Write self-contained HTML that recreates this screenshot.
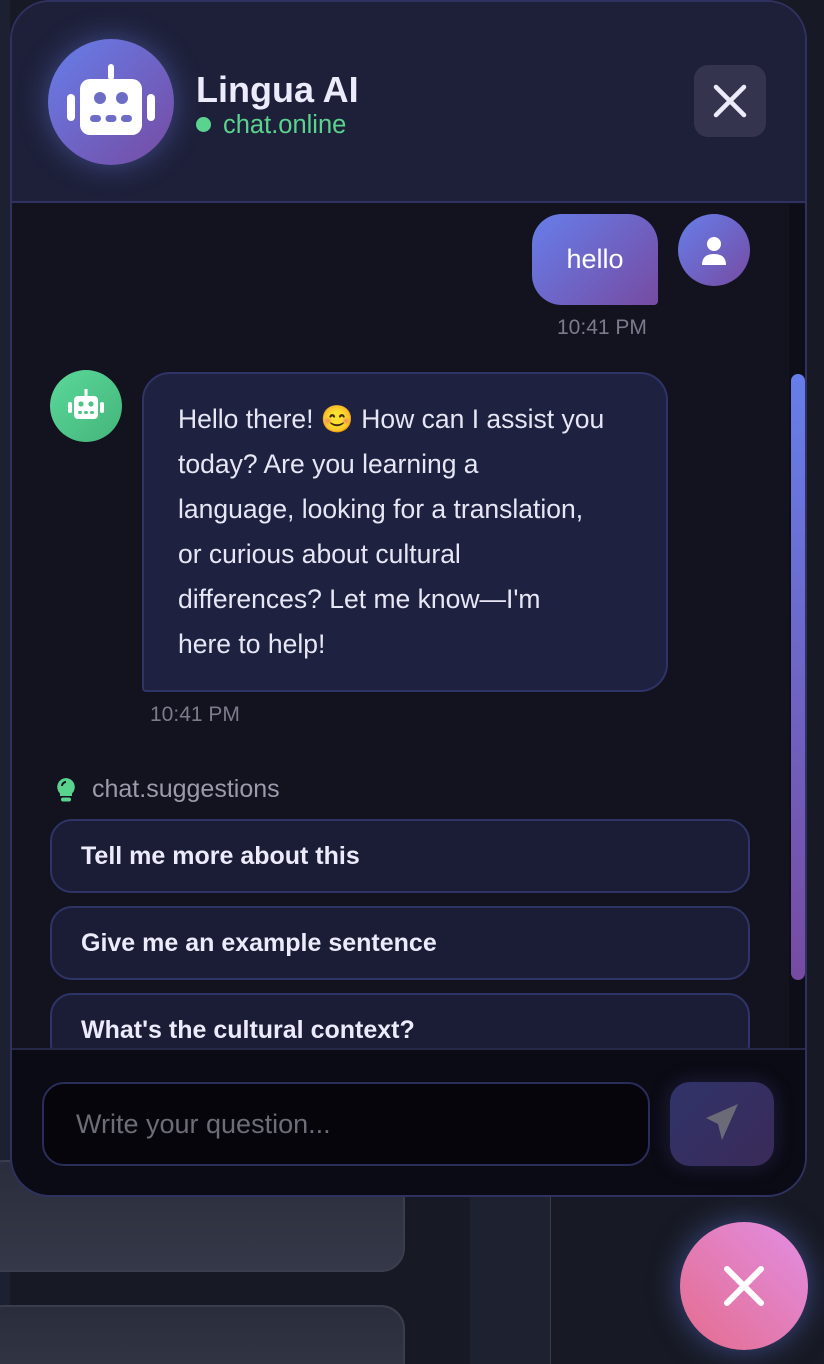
<!DOCTYPE html>
<html><head><meta charset="utf-8"><style>
*{box-sizing:border-box;margin:0;padding:0}
html,body{width:824px;height:1364px;overflow:hidden}
body{background:#171a24;font-family:"Liberation Sans",sans-serif;position:relative}
.bgl{position:absolute;left:0;top:0;width:10px;height:1364px;background:#1d2030}
.card{position:absolute;left:-20px;width:425px;border:2px solid #3a3d4d;border-radius:24px;background:linear-gradient(180deg,#2a2e3c,#343848)}
.vline{position:absolute;left:550px;top:1196px;width:1px;height:170px;background:#3a3d4d}
.col{position:absolute;left:470px;top:1196px;width:80px;height:170px;background:#1d2130}
.panel{position:absolute;left:10px;top:0;width:797px;height:1197px;border:2px solid #2f3160;border-radius:40px;overflow:hidden;background:#13121f}
.head{position:absolute;left:0;top:0;right:0;height:201px;background:#1e2039;border-bottom:2px solid #2f3160}
.av{position:absolute;left:36px;top:37px;width:126px;height:126px;border-radius:50%;background:linear-gradient(135deg,#667eea,#764ba2);box-shadow:0 0 30px rgba(102,126,234,.45)}
.title{position:absolute;left:184px;top:67px;color:#ecebfb;font-size:36px;font-weight:bold}
.status{position:absolute;left:184px;top:109px;color:#5ad38f;font-size:25.5px}
.status i{display:inline-block;width:15px;height:15px;border-radius:50%;background:#5ad38f;margin-right:12px;vertical-align:1px}
.xb{position:absolute;left:682px;top:63px;width:72px;height:72px;border-radius:14px;background:#34344e}
.ub{position:absolute;left:520px;top:212px;width:126px;height:91px;border-radius:30px 30px 4px 30px;background:linear-gradient(135deg,#667eea,#764ba2);color:#fff;font-size:27px;text-align:center;line-height:91px}
.uav{position:absolute;left:666px;top:212px;width:72px;height:72px;border-radius:50%;background:linear-gradient(135deg,#667eea,#764ba2)}
.t{position:absolute;color:#7c7b8c;font-size:21px}
.bav{position:absolute;left:38px;top:368px;width:72px;height:72px;border-radius:50%;background:linear-gradient(135deg,#5ad89a,#45b57a)}
.bb{position:absolute;left:130px;top:370px;width:526px;height:320px;border:2px solid #2f3466;border-radius:28px 28px 28px 4px;background:#1e2140;color:#e6e6f4;font-size:26.5px;line-height:45px;padding:23px 0 0 34px;white-space:nowrap}
.sg{position:absolute;left:80px;top:773px;color:#9c9bab;font-size:25px}
.sbtn{position:absolute;left:38px;width:700px;height:74px;border:2px solid #2f3466;border-radius:22px;background:#1b1c35;color:#ecebfb;font-size:25px;font-weight:bold;padding-left:29px;line-height:70px}
.track{position:absolute;left:777px;top:202px;width:16px;height:844px;background:#0e0e18}
.thumb{position:absolute;left:779px;top:372px;width:14px;height:606px;border-radius:8px;background:linear-gradient(180deg,#667eea,#764ba2)}
.foot{position:absolute;left:0;top:1046px;right:0;bottom:0;background:#0b0b15;border-top:2px solid #262848}
.inp{position:absolute;left:30px;top:32px;width:608px;height:84px;border:2px solid #2a2d5a;border-radius:22px;background:#05050b;color:#6d6d78;font-size:27px;line-height:80px;padding-left:32px}
.send{position:absolute;left:658px;top:32px;width:104px;height:84px;border-radius:20px;background:linear-gradient(135deg,#30346a,#3a2a58);box-shadow:0 0 20px rgba(80,80,160,.3)}
.fab{position:absolute;left:680px;top:1222px;width:128px;height:128px;border-radius:50%;background:linear-gradient(225deg,#e28ee4,#e46c8c);box-shadow:0 0 30px rgba(100,120,230,.5)}
</style></head><body>
<div class="bgl"></div>
<div class="card" style="top:1160px;height:112px"></div>
<div class="card" style="top:1305px;height:100px"></div>
<div class="col"></div><div class="vline"></div>
<div class="panel">
 <div class="head">
  <div class="av"><svg width="126" height="126" viewBox="0 0 126 126"><rect x="60" y="25" width="6" height="16" rx="3" fill="#fff"/><rect x="32" y="40" width="62" height="56" rx="10" fill="#fff"/><rect x="19" y="55" width="8" height="27" rx="4" fill="#fff"/><rect x="99" y="55" width="8" height="27" rx="4" fill="#fff"/><circle cx="52" cy="59" r="6" fill="#6d6cc6"/><circle cx="74" cy="59" r="6" fill="#6d6cc6"/><rect x="42" y="76" width="11" height="7" rx="3.5" fill="#6d6cc6"/><rect x="57.5" y="76" width="11" height="7" rx="3.5" fill="#6d6cc6"/><rect x="73" y="76" width="11" height="7" rx="3.5" fill="#6d6cc6"/></svg></div>
  <div class="title">Lingua AI</div>
  <div class="status"><i></i>chat.online</div>
  <div class="xb"><svg width="72" height="72"><path d="M22 22L50 50M50 22L22 50" stroke="#ecebfb" stroke-width="4.5" stroke-linecap="round"/></svg></div>
 </div>
 <div class="ub">hello</div>
 <div class="uav"><svg width="72" height="72"><circle cx="36" cy="30" r="7" fill="#fff"/><path d="M24 51Q24 40 36 40Q48 40 48 51Z" fill="#fff"/></svg></div>
 <div class="t" style="left:545px;top:314px">10:41 PM</div>
 <div class="bav"><svg width="72" height="72"><rect x="34.5" y="19" width="3" height="8" fill="#fff"/><rect x="24" y="26" width="24" height="23" rx="4" fill="#fff"/><rect x="18" y="32" width="4" height="11" rx="2" fill="#fff"/><rect x="50" y="32" width="4" height="11" rx="2" fill="#fff"/><circle cx="31" cy="34" r="2.6" fill="#4fc585"/><circle cx="41" cy="34" r="2.6" fill="#4fc585"/><rect x="28" y="41" width="4" height="3" rx="1.5" fill="#4fc585"/><rect x="34" y="41" width="4" height="3" rx="1.5" fill="#4fc585"/><rect x="40" y="41" width="4" height="3" rx="1.5" fill="#4fc585"/></svg></div>
 <div class="bb">Hello there! 😊 How can I assist you<br>today? Are you learning a<br>language, looking for a translation,<br>or curious about cultural<br>differences? Let me know—I'm<br>here to help!</div>
 <div class="t" style="left:138px;top:701px">10:41 PM</div>
 <svg style="position:absolute;left:42px;top:775px" width="24" height="26"><path d="M12 1a9 9 0 0 0-6 15.5V19h12v-2.5A9 9 0 0 0 12 1z" fill="#5ad38f"/><rect x="7" y="20.5" width="10" height="4" rx="2" fill="#5ad38f"/><path d="M8 9a4 4 0 0 1 4-4" stroke="#13121f" stroke-width="2" fill="none"/></svg>
 <div class="sg">chat.suggestions</div>
 <div class="sbtn" style="top:817px">Tell me more about this</div>
 <div class="sbtn" style="top:904px">Give me an example sentence</div>
 <div class="sbtn" style="top:991px">What's the cultural context?</div>
 <div class="track"></div><div class="thumb"></div>
 <div class="foot">
  <div class="inp">Write your question...</div>
  <div class="send"><svg width="104" height="84"><path d="M68 22L36 36L48 42L52 58Z" fill="#6b6b78"/></svg></div>
 </div>
</div>
<div class="fab"><svg width="128" height="128"><path d="M47 47L81 81M81 47L47 81" stroke="#fff" stroke-width="6" stroke-linecap="round"/></svg></div>
</body></html>
